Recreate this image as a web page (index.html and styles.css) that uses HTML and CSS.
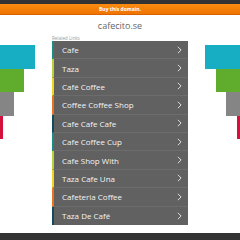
FILE: index.html
```html
<!DOCTYPE html>
<html>
<head>
<meta charset="utf-8">
<link rel="stylesheet" href="styles.css">
</head>
<body>
<div class="topbar"></div>
<div class="buybar">Buy this domain.</div>
<div class="domain">cafecito.se</div>
<div class="main">
  <div class="deco deco-left">
    <div class="bar cyan w35"></div>
    <div class="bar green w24"></div>
    <div class="bar grey w14"></div>
    <div class="bar red w3"></div>
  </div>
  <div class="center">
    <div class="related">Related Links</div>
    <ul class="links">
      <li class="c1"><span>Cafe</span><svg viewBox="0 0 6 10"><path d="M1 1l4 4-4 4"/></svg></li>
      <li class="c2"><span>Taza</span><svg viewBox="0 0 6 10"><path d="M1 1l4 4-4 4"/></svg></li>
      <li class="c3"><span>Café Coffee</span><svg viewBox="0 0 6 10"><path d="M1 1l4 4-4 4"/></svg></li>
      <li class="c4"><span>Coffee Coffee Shop</span><svg viewBox="0 0 6 10"><path d="M1 1l4 4-4 4"/></svg></li>
      <li class="c5"><span>Cafe Cafe Cafe</span><svg viewBox="0 0 6 10"><path d="M1 1l4 4-4 4"/></svg></li>
      <li class="c1"><span>Cafe Coffee Cup</span><svg viewBox="0 0 6 10"><path d="M1 1l4 4-4 4"/></svg></li>
      <li class="c2"><span>Cafe Shop With</span><svg viewBox="0 0 6 10"><path d="M1 1l4 4-4 4"/></svg></li>
      <li class="c3"><span>Taza Cafe Una</span><svg viewBox="0 0 6 10"><path d="M1 1l4 4-4 4"/></svg></li>
      <li class="c4"><span>Cafeteria Coffee</span><svg viewBox="0 0 6 10"><path d="M1 1l4 4-4 4"/></svg></li>
      <li class="c5"><span>Taza De Café</span><svg viewBox="0 0 6 10"><path d="M1 1l4 4-4 4"/></svg></li>
    </ul>
  </div>
  <div class="deco deco-right">
    <div class="bar cyan w35"></div>
    <div class="bar green w24"></div>
    <div class="bar grey w14"></div>
    <div class="bar red w3"></div>
  </div>
</div>
<div class="bottombar"></div>
</body>
</html>
```
FILE: styles.css
```css
* { box-sizing: border-box; }
html, body { margin: 0; padding: 0; }
body {
  width: 240px;
  height: 240px;
  overflow: hidden;
  background: #fff;
  font-family: "Open Sans", "Liberation Sans", sans-serif;
}
.topbar { height: 4px; background: #333; }
.buybar {
  height: 11px;
  background: linear-gradient(#f98c10, #ef7400);
  border-bottom: 1px solid #d86200;
  color: #fff;
  font-size: 5px;
  font-weight: 700;
  text-align: center;
  line-height: 10px;
}
.domain {
  height: 20px;
  text-align: center;
  color: #666;
  font-size: 9px;
  line-height: 20px;
  padding-top: 1px;
}
.main {
  display: flex;
  height: 197px;
}
.deco {
  width: 52px;
  padding-top: 10px;
  display: flex;
  flex-direction: column;
}
.deco-left { align-items: flex-start; }
.deco-right { align-items: flex-end; }
.bar { height: 23.5px; }
.cyan { background: #17adc3; }
.green { background: #60ad2e; }
.grey { background: #858585; }
.red { background: #d3123c; }
.w35 { width: 35px; }
.w24 { width: 24px; }
.w14 { width: 14px; }
.w3 { width: 3px; }
.center { width: 136px; }
.related {
  font-size: 4.5px;
  color: #999;
  height: 6px;
  line-height: 6px;
}
.links {
  list-style: none;
  margin: 0;
  padding: 0;
  background: #616161;
}
.links li {
  height: 18.4px;
  display: flex;
  align-items: center;
  justify-content: space-between;
  padding: 0 6px 0 8px;
  border-left: 2px solid #1b8a86;
  border-bottom: 1px solid #6c6c6c;
  color: #f4f4f4;
  font-size: 8px;
}
.links li:last-child { border-bottom: none; }
.links li.c1 { border-left-color: #1b8a80; }
.links li.c2 { border-left-color: #b9d13a; }
.links li.c3 { border-left-color: #f2d320; }
.links li.c4 { border-left-color: #e77420; }
.links li.c5 { border-left-color: #124a5e; }
.links svg {
  width: 5px;
  height: 8px;
  fill: none;
  stroke: #fff;
  stroke-width: 1;
}
.bottombar {
  height: 7px;
  margin-top: 1px;
  background: #333;
}
```
